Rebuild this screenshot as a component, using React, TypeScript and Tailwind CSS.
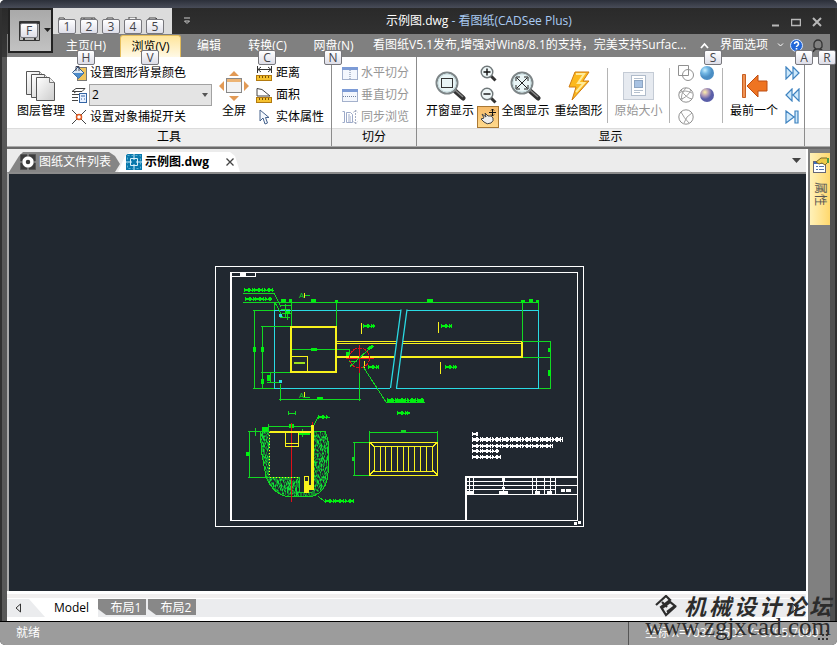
import React from "react";

function KeyTip({ k, className }: { k: string; className: string }) {
  return (
    <span
      className={`absolute z-10 flex h-[15px] w-[18px] items-center justify-center rounded-[2px] border border-[#77777c] bg-linear-to-b from-white to-[#dedee8] text-[12px] leading-[12px] text-[#44444a] ${className}`}
    >
      {k}
    </span>
  );
}

function Ico({ w = 16, h = 16, box, children }: { w?: number; h?: number; box?: string; children: React.ReactNode }) {
  return (
    <svg width={w} height={h} viewBox={box ?? `0 0 ${w} ${h}`} fill="none" className="shrink-0" aria-hidden="true">
      {children}
    </svg>
  );
}

/* ---------- ribbon building blocks ---------- */

function Big({ label, width, disabled, children }: { label: string; width: string; disabled?: boolean; children: React.ReactNode }) {
  return (
    <button disabled={disabled} className={`flex shrink-0 flex-col items-center whitespace-nowrap ${width} ${disabled ? "text-[#969696]" : "text-black"}`}>
      <span className="flex h-10 items-center pt-2">{children}</span>
      <span className="text-[12px] leading-[18px]">{label}</span>
    </button>
  );
}

function Row({ label, disabled, children }: { label: string; disabled?: boolean; children: React.ReactNode }) {
  return (
    <button disabled={disabled} className={`flex h-[22px] items-center gap-[3px] whitespace-nowrap text-[12px] leading-4 ${disabled ? "text-[#969696]" : "text-black"}`}>
      {children}
      {label}
    </button>
  );
}

function Group({ title, className, children }: { title: string; className: string; children: React.ReactNode }) {
  return (
    <section className={`flex shrink-0 flex-col border-r border-[#8c8c8c] ${className}`}>
      <div className="flex h-[71px] pt-[5px]">{children}</div>
      <h2 className="h-[18px] border-t border-[#dcdcdc] bg-[#eeeeee] text-center text-[12px] leading-4 text-black">{title}</h2>
    </section>
  );
}

function Sep() {
  return <div className="mt-[6px] h-[55px] w-px shrink-0 bg-[#b4b4b4]" />;
}

/* ---------- icons ---------- */

function Magnifier({ kind }: { kind: "window" | "all" }) {
  return (
    <Ico w={31} h={31}>
      <path d="M19 19L28 27" stroke="#333" strokeWidth="5" strokeLinecap="round" />
      <path d="M20 19L28 26" stroke="#888" strokeWidth="1.5" />
      <circle cx="12" cy="12" r="10.5" fill="#e9f5f6" stroke="#7e8688" strokeWidth="2" />
      <circle cx="12" cy="12" r="9" stroke="#c8dde0" />
      {kind === "window" ? (
        <rect x="6.500" y="7.500" width="11" height="9" stroke="#333" />
      ) : (
        <path d="M7 7l10 10M17 7L7 17M6 10V6h4M14 6h4v4M18 14v4h-4M10 18H6v-4" stroke="#222" />
      )}
    </Ico>
  );
}

function ZoomIcon({ plus }: { plus?: boolean }) {
  return (
    <Ico w={17} h={17}>
      <path d="M11 11l4.500 4.500" stroke="#333" strokeWidth="3" />
      <circle cx="7" cy="7" r="5.800" fill="#edf6f7" stroke="#70787a" strokeWidth="1.400" />
      <path d={plus ? "M3.500 7h7M7 3.500v7" : "M3.500 7h7"} stroke="#111" strokeWidth="1.400" />
    </Ico>
  );
}

function Pages() {
  return (
    <Ico w={31} h={31}>
      <defs>
        <linearGradient id="page" x1="0" y1="0" x2="1" y2="1">
          <stop offset="0" stopColor="#fff" />
          <stop offset="1" stopColor="#ccc" />
        </linearGradient>
      </defs>
      {[0, 5, 10].map((d) => (
        <g key={d} transform={`translate(${d} ${d * 0.6})`}>
          <path d="M.5.5h13l5 5v18H.5z" fill="url(#page)" stroke="#555" />
          <path d="M13.500.5v5h5" fill="#eee" stroke="#777" />
        </g>
      ))}
    </Ico>
  );
}

function Ruler({ area }: { area?: boolean }) {
  return (
    <Ico w={17} h={16}>
      {area ? <path d="M1 9V1.500L6 2.500l8 6.500z" fill="#fff" stroke="#444" /> : <path d="M1.500 1v7M15.500 1v7M2 4.500h13M5 2L2 4.500 5 7M12 2l3 2.500L12 7" stroke="#333" />}
      <rect x=".5" y="10.500" width="15" height="5" fill="#f5c12e" stroke="#b27a10" />
      <path d="M3.500 11v2M6.500 11v2M9.500 11v2M12.500 11v2" stroke="#775008" />
    </Ico>
  );
}

function SplitIcon({ kind }: { kind: "h" | "v" | "sync" }) {
  if (kind === "sync")
    return (
      <Ico>
        <path d="M.5 2.500h2v11h-2M4.500 3.500h4l2 2v8h-6zM6 6h2M6 8h3M6 10h3M6 12h3" stroke="#9daac9" />
        <path d="M13.500 1v14M11.500 3.500l2-2.500 2 2.500M11.500 12.500l2 2.500 2-2.500" stroke="#a7afc4" strokeDasharray="2 1" />
      </Ico>
    );
  return (
    <Ico>
      <rect x=".5" y="2.500" width="15" height="12" fill="#f4f7fd" stroke="#a4b1cc" />
      <path d="M0 3.500h16" stroke="#7c9bd6" strokeWidth="3" />
      <path d={kind === "h" ? "M8 5v9" : "M1 9.500h14"} stroke="#71829f" strokeDasharray="1 1" />
    </Ico>
  );
}

function Ball({ id, a, b, c }: { id: string; a: string; b: string; c: string }) {
  return (
    <Ico>
      <defs>
        <radialGradient id={id} cx=".35" cy=".3">
          <stop offset="0" stopColor={a} />
          <stop offset=".5" stopColor={b} />
          <stop offset="1" stopColor={c} />
        </radialGradient>
      </defs>
      <circle cx="8" cy="8" r="7" fill={`url(#${id})`} />
    </Ico>
  );
}

function BlueArrow({ d }: { d: string }) {
  return (
    <Ico w={15} h={14}>
      <path d={d} fill="#cfe9fb" stroke="#3f83c0" strokeWidth="1.200" />
    </Ico>
  );
}

/* ---------- the drawing ---------- */

function noise() {
  let seed = 7;
  let d = "";
  for (let y = 0; y < 40; y++)
    for (let x = 0; x < 40; x++) {
      seed = (seed * 1103515245 + 12345) % 2147483648;
      if ((seed >> 12) % 100 < 47) d += `M${x} ${y}h1v1h-1z`;
    }
  return d;
}
const NOISE = noise();

function Scribble({ x, y, w, c = "#00f010", h = 4 }: { x: number; y: number; w: number; c?: string; h?: number }) {
  return (
    <g stroke={c}>
      <path d={`M${x} ${y}h${w}`} strokeWidth={h - 1} strokeDasharray="4 1 2 1 6 1" />
      <path d={`M${x} ${y}h${w}`} strokeWidth={h + 1} strokeDasharray="1 3 2 2 1 1" />
      <path d={`M${x} ${y}h${w}`} strokeWidth={1} />
    </g>
  );
}

function Drawing() {
  const g = "#12d922";
  const ye = "#f8f21c";
  const cy = "#2adbe4";
  return (
    <svg viewBox="9 175 797 416" className="h-full w-full" fill="none" shapeRendering="crispEdges" role="img" aria-label="示例图.dwg">
      <defs>
        <pattern id="hatch" width="40" height="40" patternUnits="userSpaceOnUse">
          <path d={NOISE} fill="#10dc38" />
        </pattern>
      </defs>
      <g stroke="#fff">
        <rect x="215.500" y="266.500" width="368" height="260" />
        <path d="M231.500 272.500H577.500V520.500H231M231.500 276.500h24v-4" />
        <path d="M231 272V521" strokeWidth="2" />
        <path d="M240 274.500h6" strokeWidth="3" />
        <path d="M574 523.500h3M578 522.500h3" strokeWidth="3" />
      </g>

      <g stroke={cy}>
        <path d="M401 310.500H274.500V388.500H390M406.500 310.500H538.500V388.500H396" />
      </g>
      <g stroke={g}>
        <path d="M243 293.500h31l7 14M243 302.500H539M275 303l8 15M274.500 302v8M291.500 302v24M336.500 302v24M522.500 302v39M538.500 302v8" />
        <path d="M254.500 310v79M253 310.500h21M253 388.500h21M262.500 326v62M261 326.500h30M261 372.500h30M270.500 372v10M267 382.500h13" />
        <path d="M280.500 384v17M359.500 372v29M279 399.500h82M291 349.500h58.500v8M522 341.500h29M522 357.500h29M539 388.500h12M550.500 341v48" />
        <path d="M281 305.500h10M281 309.500h9M285.500 304v14M282 313.500h9M287.500 311v9M280 317.500h10M349 361.500h8M304 295.500h6M304 397.500h6" />
      </g>
      <g stroke="#00f010" strokeWidth="3">
        <path d="M254.500 347v5M262.500 347v5M262.500 379v5M268.500 375v6M549.500 348v4M549.500 370v6M347.500 352v6M311 300.500h5M281 300.500h5M289 300.500h3M335 301.500h3M427 300.500h6M521 301.500h4M529 300.500h4M536 301.500h3M311 349.500h6M317 398.500h6M286 312.500h4" />
      </g>
      <path d="M279 315.500h3M279 381.500h3" stroke={cy} strokeWidth="3" />
      <Scribble x={244} y={290.500} w={30} h={3} />
      <Scribble x={245} y={299.500} w={27} h={3} />

      <g stroke={ye}>
        <rect x="291" y="327" width="45" height="45" strokeWidth="2" />
        <path d="M292 356.500h15.500V371M336 341.500H522M336 343.500H522" />
        <path d="M336 357h187M522 342v16" strokeWidth="2" />
        <path d="M361.500 323v11M438.500 322v11M364.500 361v9M440.500 362v12M304.500 293v5M304.500 392v5" />
        <path d="M294 363.500h11" stroke="#9be01c" strokeWidth="2" />
      </g>
      <path d="M401 309L407 309 396 390 390 390Z" fill="#212830" />
      <path d="M401 310L390.500 388.500M407 310L396.500 388.500" stroke={cy} shapeRendering="auto" strokeWidth="1.300" />
      <text x="299" y="298" fontSize="8" fill={g}>A</text>
      <text x="299" y="398" fontSize="8" fill={g}>A</text>
      <Scribble x={363} y={326.500} w={12} h={3} />
      <Scribble x={441} y={326.500} w={11} h={3} />
      <Scribble x={368} y={367.500} w={11} h={3} />
      <Scribble x={445} y={367.500} w={12} h={3} />
      <g stroke="#e01018">
        <circle cx="359.500" cy="358.500" r="10" strokeDasharray="4 1" />
        <path d="M359.500 345v28M346 358.500h28" />
      </g>
      <path d="M350 367L373 346M363 367L386 402.500H425" stroke={g} />
      <path d="M368 350l5-4" stroke="#00f010" strokeWidth="3" />
      <Scribble x={387} y={400.500} w={37} />
      <Scribble x={397} y={413.500} w={13} h={3} />

      {/* pit section */}
      <path fillRule="evenodd" fill="url(#hatch)" d="M260 431L262 455 266 477Q272 493 286 497H312Q327 492 328 474L329 455Q329 440 325 432H312V493H299V477H270V431Z" />
      <path stroke={g} d="M260 431L262 455 266 477Q272 493 286 497H312Q327 492 328 474L329 455Q329 440 325 432H312M299.500 493H312M299.500 477v16" />
      <g stroke={g}>
        <path d="M249.500 431v47M248 431.500h22M248 477.500h51M268.500 424v7M268 426.500h46M314 425l4-7h12M318 497l7 5h29M288 413.500h8M288.500 411v4M295.500 411v4M255.500 428v8M298 431v7M302 429v8" />
      </g>
      <g stroke="#00f010" strokeWidth="4">
        <path d="M246 454.500h4M289 426.500h5M262 429.500h6M299 433h11" />
      </g>
      <Scribble x={318} y={417.500} w={10} h={3} />
      <Scribble x={325} y={501.500} w={29} h={3} />
      <path d="M291.500 423v79M312.500 422v8" stroke="#e01018" />
      <g stroke={ye}>
        <path d="M270 432h42" strokeWidth="2" />
        <path d="M269.500 432v45M270 477.500h29" strokeDasharray="1 2" />
        <path d="M312 425v65" strokeWidth="3" />
        <path d="M285.500 432v14.500h13V432M285 443.500h14M304.500 485v-8h4v8" />
        <path d="M306 481v12M309 488h4" strokeWidth="5" />
      </g>

      {/* cover plan */}
      <g stroke={g}>
        <path d="M369.500 431v11M437.500 431v11M369 432.500h69M354.500 442v34M353 442.500h16M353 475.500h16" />
        <path d="M401 431.500h5M353.500 457v4" strokeWidth="3" />
      </g>
      <g stroke={ye}>
        <rect x="369.500" y="442.500" width="68" height="33" />
        <path d="M374 446.500h59M374 471.500h59M374.500 446v25M380.500 446v25M385.500 446v25M391.500 446v25M397.500 446v25M403.500 446v25M408.500 446v25M414.500 446v25M420.500 446v25M426.500 446v25M432.500 446v25" />
        <path d="M370 443l4 4M437 443l-4 4M370 475l4-4M437 475l-4-4" />
      </g>

      {/* notes and title block */}
      <Scribble x={472} y={434.500} w={6} c="#fff" h={3} />
      <Scribble x={472} y={440} w={91} c="#fff" />
      <Scribble x={472} y={446} w={81} c="#fff" h={3} />
      <Scribble x={472} y={451.500} w={27} c="#fff" h={3} />
      <Scribble x={472} y={457.500} w={29} c="#fff" h={3} />
      <g stroke="#fff">
        <path d="M465 477H577M466 477V520" strokeWidth="2" />
        <path d="M466 481.500h90M466 485.500H577M466 489.500h90M466 494.500H577M469.500 478v16M473.500 478v16M532.500 478v16M536.500 478v16M544.500 478v16M550.500 478v16M555.500 478v16M503.500 478v16" />
        <path d="M467 492.500h6M499 492.500h9M535 492.500h5M547 492.500h5M561 490.500h4M566 490.500h5M502 479.500h3M502 488.500h3" strokeWidth="3" />
      </g>
    </svg>
  );
}

const quick = [
  { k: "1", n: "打开", d: "M1 11V1h5l2 3h6v3M3 11l2-5h11" },
  { k: "2", n: "保存", d: "M1 1h14v10H1zM4 1v5h8V1" },
  { k: "3", n: "打印", d: "M4 5l1-4h6l1 4M1 11V6l2-1h10l2 1v5z" },
  { k: "4", n: "打印预览", d: "M5 5V0h7v5M2 11V6h12v5z" },
  { k: "5", n: "导出", d: "M3 11V1h7l4 4v6M10 1v4h4" },
];

export default function App() {
  return (
    <div className="relative flex min-h-screen flex-col overflow-hidden rounded-[5px] bg-[#3d3d3d] font-['Open_Sans','Noto_Sans_CJK_SC',sans-serif] text-[12px]">
      <div className="h-2 bg-linear-to-b from-[#2c303a] to-[#484c58]" />

      <div className="flex flex-1 flex-col border-x-2 border-[#303030] bg-linear-to-r from-[#585858] via-[#444] to-[#505050] px-[5px]">
        <header className="relative z-20 -mx-[5px] bg-linear-to-b from-[#2a2a2a] to-[#383838] px-[5px]">
          <div className="flex h-[26px]">
            <div className="w-[46px] shrink-0" />
            <div className="flex w-[119px] shrink-0 gap-[6px] bg-[#dcdcdc] pt-[5px] pl-[5px]">
              {quick.map((q) => (
                <button key={q.k} aria-label={q.n} className="relative h-5 w-4">
                  <Ico w={16} h={12}>
                    <path d={q.d} fill="#f4f4f4" stroke="#444" />
                  </Ico>
                  <KeyTip k={q.k} className="top-[6px] left-0" />
                </button>
              ))}
            </div>
            <button aria-label="自定义快速访问工具栏" className="ml-[9px] flex w-3 shrink-0 items-center justify-center">
              <Ico w={8} h={8}>
                <path d="M1 1h6M1.500 4h5L4 6.500z" stroke="#ccc" />
              </Ico>
            </button>
            <h1 className="min-w-0 flex-1 truncate pt-[3px] pl-[193px] text-[12px] leading-[19px] text-[#a9cbf3]">
              <span className="text-white">示例图.dwg</span> - 看图纸(CADSee Plus)
            </h1>
            <div className="flex items-center gap-[11px] pr-2 pt-px text-[#b8b8b8]">
              <button aria-label="最小化"><Ico w={10} h={10}><path d="M2 8.500h7" stroke="currentColor" strokeWidth="2" /></Ico></button>
              <button aria-label="最大化"><Ico w={10} h={10}><path d="M.5 2.500h9v6h-9zM0 2.500h10" stroke="currentColor" strokeWidth="1.500" /></Ico></button>
              <button aria-label="关闭"><Ico w={10} h={10}><path d="M1 1l8 8M9 1L1 9" stroke="currentColor" strokeWidth="2" /></Ico></button>
            </div>
          </div>

          <nav className="mx-0 flex h-[23px] items-end bg-[#808080] pl-[45px] text-white">
            <button className="relative h-[22px] w-[68px] shrink-0 leading-[20px]">
              主页(H)
              <KeyTip k="H" className="top-[15px] left-[25px]" />
            </button>
            <button className="relative h-[22px] w-[61px] shrink-0 rounded-t-[3px] border border-b-0 border-[#e4bd5c] bg-linear-to-b from-[#ffe59a] to-[#fff9e5] leading-[20px] text-black">
              浏览(V)
              <KeyTip k="V" className="top-[14px] left-[20px]" />
            </button>
            <button className="h-[22px] w-14 shrink-0 leading-[20px]">编辑</button>
            <button className="relative h-[22px] w-[61px] shrink-0 leading-[20px]">
              转换(C)
              <KeyTip k="C" className="top-[15px] left-[21px]" />
            </button>
            <button className="relative h-[22px] w-[71px] shrink-0 leading-[20px]">
              网盘(N)
              <KeyTip k="N" className="top-[15px] left-[26px]" />
            </button>
            <a href="#news" className="ml-1 h-[23px] w-[318px] shrink-0 truncate leading-[21px]">
              看图纸V5.1发布,增强对Win8/8.1的支持，完美支持Surface Pro
            </a>
            <button aria-label="折叠功能区" className="relative ml-auto flex h-[23px] w-4 shrink-0 items-center">
              <Ico w={9} h={9}><path d="M1 7l3.500-4L8 7" stroke="#fff" strokeWidth="1.800" /></Ico>
              <KeyTip k="S" className="top-[16px] left-[4px]" />
            </button>
            <button className="flex h-[23px] w-[70px] shrink-0 items-center gap-[9px] whitespace-nowrap pb-px pl-1 leading-4">
              界面选项
              <Ico w={7} h={6}><path d="M1 1.500l2.500 2.500L6 1.500" stroke="#fff" /></Ico>
            </button>
            <button aria-label="帮助" className="relative flex h-[23px] w-[26px] shrink-0 items-center pl-1">
              <Ico w={13} h={13}>
                <circle cx="6.500" cy="6.500" r="6" fill="#2367d8" stroke="#d7e6ff" />
                <path d="M4.500 5a2 2 0 1 1 3 1.600q-1 .6-1 1.400M6.500 9v1.500" stroke="#fff" strokeWidth="1.600" />
              </Ico>
              <KeyTip k="A" className="top-[16px] left-[9px]" />
            </button>
            <button aria-label="用户" className="relative flex h-[23px] w-[18px] shrink-0 items-center">
              <Ico w={12} h={14}><path d="M2 5a4 4 0 0 1 8 0v3l-2 2H4L2 8zM1 13q1-3 4-3h2q3 0 4 3" stroke="#333" strokeWidth="1.300" /></Ico>
              <KeyTip k="R" className="top-[16px] left-[6px]" />
            </button>
          </nav>

          <button aria-label="文件" className="absolute top-0 left-[6px] h-[45px] w-[45px] border-2 border-[#222] bg-linear-to-b from-[#a9a9a9] to-[#c2c2c2]">
            <span className="absolute top-[10px] left-[9px]">
              <Ico w={21} h={21}>
                <path d="M.5 1.500h20v19h-20z" stroke="#333" />
                <path d="M1 3h19M5 1v19M16 1v19" stroke="#333" strokeWidth="2" />
              </Ico>
            </span>
            <KeyTip k="F" className="top-[13px] left-[10px]" />
            <span className="absolute top-[18px] left-[34px]">
              <Ico w={7} h={4}><path d="M0 0h7L3.500 4z" fill="#222" /></Ico>
            </span>
          </button>
        </header>

        <div className="flex overflow-hidden border-b border-[#aaa] bg-white">
          <Group title="工具" className="w-[325px] pl-0">
            <div className="w-[8px] shrink-0" />
            <Big label="图层管理" width="w-[52px]"><Pages /></Big>
            <div className="ml-1 flex w-[141px] shrink-0 flex-col">
              <Row label="设置图形背景颜色">
                <Ico>
                  <rect x="6.500" y="2.500" width="9" height="13" fill="#f0c45c" stroke="#777" />
                  <path d="M1.500 7.500L7 2l6 6-5.500 5.500z" fill="#dbe8f5" stroke="#335c8c" />
                  <path d="M2 8h11l-5.500 5.500z" fill="#4d8bc9" />
                  <path d="M5 6V1.500h3V6" stroke="#445" />
                </Ico>
              </Row>
              <div className="flex h-[22px] items-center gap-[2px]">
                <label htmlFor="layer" title="图层" className="shrink-0">
                  <Ico>
                    <path d="M5 1.500h9l-3 3H1zM1 7.500h7M1 10.500h6M3 6l2-1.500M1 13.500h6" stroke="#444" />
                    <rect x="8.500" y="6.500" width="7" height="9" fill="#e8f1ff" stroke="#3465a4" />
                    <path d="M10 9h4M10 12h1M13 12h1" stroke="#3465a4" />
                  </Ico>
                </label>
                <div className="relative flex-1">
                  <select id="layer" defaultValue="2" className="block h-[22px] w-full appearance-none border border-[#a2a2a2] bg-[#e4e4e4] pl-[2px] text-[12px] leading-4 text-black">
                    <option>1</option>
                    <option>2</option>
                    <option>3</option>
                  </select>
                  <span className="pointer-events-none absolute top-[9px] right-1">
                    <Ico w={6} h={4}><path d="M0 0h6L3 4z" fill="#555" /></Ico>
                  </span>
                </div>
              </div>
              <Row label="设置对象捕捉开关">
                <Ico>
                  <path d="M1 1l14 14M15 1L1 15" stroke="#444" />
                  <circle cx="8" cy="8" r="2.500" fill="#fff" stroke="#e05a20" strokeWidth="1.500" />
                </Ico>
              </Row>
            </div>
            <Big label="全屏" width="w-[44px]">
              <Ico w={30} h={30}>
                <path d="M15 0l5 5H10zM15 30l5-5H10zM0 15l5-5v10zM30 15l-5-5v10z" fill="#e29a55" />
                <rect x="7.500" y="7.500" width="15" height="14" fill="#f3f3f3" stroke="#888" />
                <path d="M8 9.500h14" stroke="#edb474" strokeWidth="3" />
              </Ico>
            </Big>
            <div className="flex flex-col">
              <Row label="距离"><Ruler /></Row>
              <Row label="面积"><Ruler area /></Row>
              <Row label="实体属性">
                <Ico w={17} h={16}><path d="M4 1v11l3-3 2 6 2.500-1L9.500 8.500H13z" fill="#f4f8fd" stroke="#46628c" /></Ico>
              </Row>
            </div>
          </Group>

          <Group title="切分" className="w-[85px]">
            <div className="flex flex-col pl-[10px]">
              <Row label="水平切分" disabled><SplitIcon kind="h" /></Row>
              <Row label="垂直切分" disabled><SplitIcon kind="v" /></Row>
              <Row label="同步浏览" disabled><SplitIcon kind="sync" /></Row>
            </div>
          </Group>

          <Group title="显示" className="w-[388px]">
            <div className="w-[6px] shrink-0" />
            <Big label="开窗显示" width="w-[54px]"><Magnifier kind="window" /></Big>
            <div className="flex w-[22px] shrink-0 flex-col">
              <button aria-label="放大" className="flex h-[22px] items-center justify-center"><ZoomIcon plus /></button>
              <button aria-label="缩小" className="flex h-[22px] items-center justify-center"><ZoomIcon /></button>
              <button aria-label="平移" aria-pressed="true" className="flex h-[22px] items-center justify-center border border-[#a97834] bg-linear-to-b from-[#f6bb6a] to-[#ffd98c]">
                <Ico>
                  <path d="M2 5l4 3-1-4 3 3q4-1 5 2 1 3-2 5-4 2-7-1L1 10l3-1z" fill="#eee" stroke="#444" />
                  <path d="M12.500 0v7M9 3.500h7M11 1.500L12.500 0 14 1.500M11 5.500L12.500 7 14 5.500" stroke="#111" />
                </Ico>
              </button>
            </div>
            <Big label="全图显示" width="w-[53px]"><Magnifier kind="all" /></Big>
            <Big label="重绘图形" width="w-[53px]">
              <Ico w={22} h={30}>
                <path d="M7 1h14l-6 9h6L4 29l4-13H1z" fill="#fcb91e" stroke="#d07c12" />
                <path d="M8 3h8l-6 9h6L8 21" stroke="#ffeb9a" strokeWidth="2" />
              </Ico>
            </Big>
            <div className="w-[2px] shrink-0" />
            <Sep />
            <Big label="原始大小" width="w-[61px]" disabled>
              <Ico w={31} h={28}>
                <rect x=".5" y=".5" width="30" height="27" fill="#e6eaf0" stroke="#c4cbd5" />
                <rect x="8.500" y="3.500" width="14" height="20" fill="#fff" stroke="#b0bccb" />
                <rect x="11.500" y="8.500" width="8" height="7" fill="#a8c2e2" stroke="#8da5c2" />
                <path d="M11 6.500h9M11 18.500h9M11 20.500h6" stroke="#b4c0ce" />
              </Ico>
            </Big>
            <Sep />
            <div className="grid w-[50px] shrink-0 grid-cols-2 content-start items-center pl-2 [&>button]:flex [&>button]:h-[22px] [&>button]:w-[22px] [&>button]:items-center">
              <button aria-label="二维线框"><Ico><path d="M.5.500h10v10H.5z" stroke="#909090" /><circle cx="10" cy="10" r="5.500" stroke="#909090" /></Ico></button>
              <button aria-label="着色"><Ball id="ball-a" a="#c8efff" b="#72b7e4" c="#4b8ec4" /></button>
              <button aria-label="三维线框"><Ico><circle cx="8" cy="8" r="7.200" stroke="#909090" /><path d="M3 3q5 8 11 9M13 3Q8 12 2 12M1 6q6-4 13 0M8 1q-6 6-4 12" stroke="#a0a0a0" /></Ico></button>
              <button aria-label="渲染"><Ball id="ball-b" a="#fff0a8" b="#b8a0b8" c="#5a5ea8" /></button>
              <button aria-label="消隐"><Ico><circle cx="8" cy="8" r="7.200" stroke="#909090" /><path d="M3 3q3 6 8 11M14 4Q8 7 6 14" stroke="#a0a0a0" /></Ico></button>
            </div>
            <div className="w-[2px] shrink-0" />
            <Sep />
            <Big label="最前一个" width="w-[62px]">
              <Ico w={27} h={26}>
                <path d="M1.500 1.500h3v23h-3z" fill="#ef9354" stroke="#c85f22" />
                <path d="M6 13L17 2v6h9v10h-9v6z" fill="#ee7422" stroke="#bd4f14" />
              </Ico>
            </Big>
            <div className="flex shrink-0 flex-col [&>button]:flex [&>button]:h-[22px] [&>button]:items-center">
              <button aria-label="下一个"><BlueArrow d="M1 1l6 6-6 6zM8 1l6 6-6 6z" /></button>
              <button aria-label="上一个"><BlueArrow d="M7 1L1 7l6 6zM14 1L8 7l6 6z" /></button>
              <button aria-label="最后一个"><BlueArrow d="M1 1l8 6-8 6zM10 1h3v12h-3z" /></button>
            </div>
          </Group>
          <div className="mt-[71px] flex-1 border-t border-[#dcdcdc] bg-[#eeeeee]" />
        </div>

        <div className="flex flex-1 border-t-2 border-[#6a6a6a] bg-[#808080]">
          <main className="flex min-w-0 flex-1 flex-col border-r-2 border-white bg-[#ececec]">
            <div className="flex h-[23px] items-end pl-[2px]">
              <button className="flex h-5 w-[111px] shrink-0 items-center gap-[3px] bg-[#858585] pl-[11px] leading-4 whitespace-nowrap text-white [clip-path:polygon(0_100%,10px_4px,14px_0,100px_0,106px_4px,111px_12px,106px_100%)]">
                <Ico>
                  <path d="M.5.500h15v15H.5z" fill="#3c3c3c" stroke="#555" />
                  <circle cx="8" cy="8" r="4" stroke="#fff" strokeWidth="3.500" />
                  <path d="M8 0v3M8 13v3M0 8h3M13 8h3" stroke="#aaa" />
                </Ico>
                图纸文件列表
              </button>
              <div className="-ml-[2px] flex h-5 w-[122px] shrink-0 items-center bg-white pl-[8px] font-bold whitespace-nowrap text-black [clip-path:polygon(0_100%,7px_4px,12px_0,112px_0,117px_4px,122px_100%)]">
                <button className="flex flex-1 items-center gap-[3px] leading-4">
                  <Ico>
                    <path d="M0 0h16v16H0z" fill="#0a79ac" />
                    <path d="M4.500 4.500h7v7h-7zM8 0v6M8 10v6M0 8h6M10 8h6" stroke="#d9f0fa" />
                    <path d="M1.500 1.500h13v13h-13z" stroke="#5bb2d6" strokeDasharray="2 2" />
                  </Ico>
                  示例图.dwg
                </button>
                <button aria-label="关闭标签" className="mr-[6px]">
                  <Ico w={8} h={8}><path d="M.5.500l7 7M7.500.500l-7 7" stroke="#444" strokeWidth="1.300" /></Ico>
                </button>
              </div>
              <button aria-label="标签列表" className="mr-[5px] mb-[9px] ml-auto">
                <Ico w={9} h={5}><path d="M0 0h9L4.500 5z" fill="#444" /></Ico>
              </button>
            </div>
            <div className="flex flex-1 border-t-2 border-l-2 border-t-[#8b8b8b] border-l-[#a8a8a8] bg-[#212830]">
              <Drawing />
            </div>
            <div className="h-[8px] border-t-3 border-b border-white bg-[#f1efef]" />
            <div className="flex h-[22px] items-start border-b-4 border-white bg-[#ebecee] pl-[8px] leading-[18px] text-white">
              <button aria-label="向左滚动" className="mt-1 mr-2">
                <Ico w={6} h={10}><path d="M5.500 1v8L1 5z" stroke="#333" /></Ico>
              </button>
              <button className="h-[18px] w-[69px] bg-white pl-4 text-black [clip-path:polygon(0_0,100%_0,100%_100%,16px_100%)]">Model</button>
              <button className="h-4 w-12 bg-[#888] pl-2 leading-[17px] [clip-path:polygon(0_0,100%_0,100%_100%,8px_100%,0_10px)]">布局1</button>
              <button className="ml-[2px] h-4 w-12 bg-[#888] pl-2 leading-[17px] [clip-path:polygon(0_0,100%_0,100%_100%,8px_100%,0_10px)]">布局2</button>
              <button aria-label="向右滚动" className="mt-1 mr-2 ml-auto">
                <Ico w={6} h={10}><path d="M1 1v8l4-4z" stroke="#333" /></Ico>
              </button>
            </div>
          </main>
          <aside className="w-[22px] shrink-0 pt-1 pl-[2px]">
            <button className="flex h-[72px] w-5 flex-col items-center gap-[8px] bg-linear-to-r from-[#fff1b8] to-[#ffd86c] pt-1 text-[#555]">
              <Ico w={17} h={17}>
                <rect x="1.500" y="4.500" width="12" height="11" fill="#fff" stroke="#667" />
                <path d="M2 6h11" stroke="#3c6cc0" strokeWidth="2" />
                <path d="M4 9.500h2M7 9.500h5M4 12.500h2M7 12.500h5" stroke="#5577b0" />
                <path d="M4 5l5-4h6l2 3-4 4-3-2-3 1z" fill="#eecb48" stroke="#79682a" />
                <path d="M15 1h2v5h-2z" fill="#4a9a4a" />
              </Ico>
              <span className="text-[12px] leading-[14px] [text-orientation:sideways] [writing-mode:vertical-rl]">属性</span>
            </button>
          </aside>
        </div>
      </div>

      <footer className="flex h-6 shrink-0 border-t border-black bg-[#9c9c9c] leading-[21px] text-white">
        <span className="flex-1 pl-4">就绪</span>
        <span className="w-[209px] border-l border-[#555] pl-4">坐标 X=7037.4503 Y=3795.7060</span>
      </footer>
      <svg width="12" height="12" className="absolute right-2 bottom-1" aria-hidden="true">
        <path d="M9 1h2v2H9zM5 5h2v2H5zM9 5h2v2H9zM1 9h2v2H1zM5 9h2v2H5zM9 9h2v2H9z" fill="#333" />
      </svg>

      <div className="pointer-events-none absolute right-[6px] bottom-[6px] z-30 flex flex-col items-end text-[#2c2c2c]">
        <div className="flex items-center gap-[6px]">
          <svg width="24" height="22" viewBox="0 0 24 22" fill="none" stroke="currentColor" strokeWidth="2.200" aria-hidden="true">
            <path d="M2 10L12 1l4 4-9 7 5 8 10-9M8 13l8-6 5 4-8 6M8 7l5 5" />
          </svg>
          <span className="flex gap-[3px] text-[22px] leading-[26px] font-bold italic">
            {"机械设计论坛".split("").map((c) => (
              <span key={c}>{c}</span>
            ))}
          </span>
        </div>
        <span className="-mt-1 font-['Liberation_Serif',serif] text-[25px] leading-6">www.zgjxcad.com</span>
      </div>
    </div>
  );
}
